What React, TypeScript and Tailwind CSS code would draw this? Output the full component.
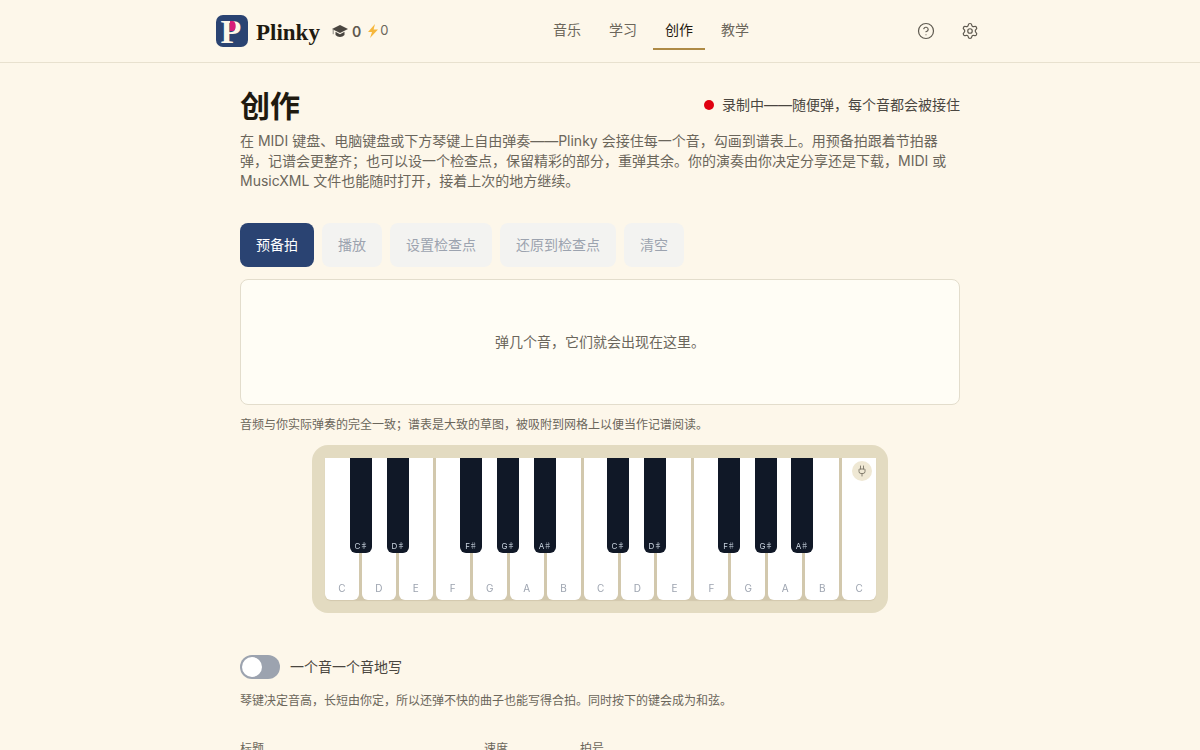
import { CircleHelp, Plug, Settings } from "lucide-react";

const navItems = ["音乐", "学习", "创作", "教学"];
const actions = ["播放", "设置检查点", "还原到检查点", "清空"];
const whiteKeys = ["C", "D", "E", "F", "G", "A", "B", "C", "D", "E", "F", "G", "A", "B", "C"];
const blackKeys = [
  { label: "C♯", className: "left-[25px]" },
  { label: "D♯", className: "left-[62px]" },
  { label: "F♯", className: "left-[135px]" },
  { label: "G♯", className: "left-[172px]" },
  { label: "A♯", className: "left-[209px]" },
  { label: "C♯", className: "left-[282px]" },
  { label: "D♯", className: "left-[319px]" },
  { label: "F♯", className: "left-[393px]" },
  { label: "G♯", className: "left-[430px]" },
  { label: "A♯", className: "left-[466px]" },
];

function Logo() {
  return (
    <svg width="32" height="32" viewBox="0 0 32 32" className="shrink-0">
      <rect width="32" height="32" rx="7" fill="#2a4372" />
      <text x="15" y="28" textAnchor="middle" fontFamily="Liberation Serif" fontWeight="700" fontSize="34" fill="#fdf7ea">
        P
      </text>
      <path d="M14 6h2.5c2 0 3.2 2 3.2 5s-1.200 5-3.200 5H14Z" fill="#d81b78" />
    </svg>
  );
}

function Cap() {
  return (
    <svg width="16" height="14" viewBox="0 0 16 14" className="shrink-0">
      <path d="M8 1 16 5 8 9 0 5Z" fill="#4a4640" />
      <path d="M3.5 7.800V11c1.200 1.300 2.800 2 4.500 2s3.300-.7 4.500-2V7.800L8 10.200Z" fill="#4a4640" />
      <path d="M1.200 5.600v4.600" stroke="#8b8880" strokeWidth="1" />
    </svg>
  );
}

function Bolt() {
  return (
    <svg width="12" height="14" viewBox="0 0 12 14" className="shrink-0">
      <path d="M8 0 1 8h4l-2 6 8-8.400H6.600Z" fill="#f6b73c" />
    </svg>
  );
}

export default function App() {
  return (
    <div className="min-h-screen bg-[#fdf7ea] font-['Inter','Noto_Sans_CJK_SC',sans-serif] text-[#1f1a10]">
      <header className="h-[63px] border-b border-[#e8e1cf]">
        <div className="mx-auto flex h-[62px] w-[768px] items-center">
          <div className="flex w-[325px] items-center">
            <Logo />
            <span className="ml-2 mt-1 font-['Liberation_Serif',serif] text-[23px] font-bold text-[#1f1a10]">Plinky</span>
            <span className="ml-3 flex items-center gap-1 text-[14px] font-semibold text-[#5f5a50]">
              <Cap />0
            </span>
            <span className="ml-[6px] flex items-center gap-[1px] text-[13px] text-[#6b665b]">
              <Bolt />0
            </span>
          </div>
          <nav className="flex h-full gap-1 pt-3">
            {navItems.map((item) => (
              <div
                key={item}
                className={`flex h-[38px] w-[52px] items-center justify-center border-b-2 pb-[2px] text-[14px] ${
                  item === "创作" ? "border-[#ae8a45] text-[#1f1a10]" : "border-transparent text-[#6b665b]"
                }`}
              >
                {item}
              </div>
            ))}
          </nav>
          <div className="flex w-[223px] items-center justify-end gap-[26px] pr-[5px] text-[#5f5a50]">
            <CircleHelp size={18} strokeWidth={1.6} />
            <Settings size={18} strokeWidth={1.6} />
          </div>
        </div>
      </header>

      <main className="mx-auto w-[720px] pt-[23px]">
        <div className="flex items-start justify-between">
          <h1 className="text-[30px] font-bold leading-[40px] text-[#1f1a10]">创作</h1>
          <div className="mt-2 flex items-center gap-2 text-[14px] text-[#4a4640]">
            <span className="h-[10px] w-[10px] rounded-full bg-[#e00010]" />
            录制中——随便弹，每个音都会被接住
          </div>
        </div>
        <p className="mt-[5px] text-[14px] leading-[20px] text-[#6b665b]">
          在 MIDI 键盘、电脑键盘或下方琴键上自由弹奏——Plinky 会接住每一个音，勾画到谱表上。用预备拍跟着节拍器弹，记谱会更整齐；也可以设一个检查点，保留精彩的部分，重弹其余。你的演奏由你决定分享还是下载，MIDI 或 MusicXML 文件也能随时打开，接着上次的地方继续。
        </p>

        <div className="mt-[32px] flex gap-2">
          <button className="h-[44px] rounded-lg bg-[#2a4372] px-4 pb-[2px] text-[14px] text-white">预备拍</button>
          {actions.map((action) => (
            <button key={action} className="h-[44px] rounded-lg bg-[#f3f3f1] px-4 pb-[2px] text-[14px] text-[#9ca3af]">
              {action}
            </button>
          ))}
        </div>

        <div className="mt-3 flex h-[126px] items-center justify-center rounded-lg border border-[#e3ddcc] bg-[#fffdf5] pb-[2px] text-[14px] text-[#6b665b]">
          弹几个音，它们就会出现在这里。
        </div>
        <p className="mt-[10px] text-[12px] leading-[20px] text-[#6b665b]">
          音频与你实际弹奏的完全一致；谱表是大致的草图，被吸附到网格上以便当作记谱阅读。
        </p>

        <div className="mx-auto mt-[10px] w-[576px] rounded-2xl bg-[#e3dbc1] pb-[13px] pl-[13px] pr-3 pt-[13px]">
          <div className="relative h-[142px]">
            <div className="flex h-full gap-[3px] rounded-b-md bg-[#d2c8ad] shadow-[0_1px_1px_#d2c8ad]">
              {whiteKeys.map((key, i) => (
                <div key={i} className="flex flex-1 items-end justify-center rounded-b-md bg-white pb-1 text-[10px] text-[#9ca3af]">
                  <span className="transform-gpu">{key}</span>
                </div>
              ))}
            </div>
            {blackKeys.map((key, i) => (
              <div
                key={i}
                className={`absolute top-0 flex h-[95px] w-[22px] items-end justify-center rounded-b-md bg-[#101827] pb-[1px] text-[8px] tracking-[-0.5px] text-[#cbd5e1] ${key.className}`}
              >
                <span className="transform-gpu">{key.label}</span>
              </div>
            ))}
            <div className="absolute right-1 top-[3px] flex h-5 w-5 items-center justify-center rounded-full bg-[#efe8d4] text-[#7a7566]">
              <Plug size={12} strokeWidth={1.8} />
            </div>
          </div>
        </div>

        <div className="mt-[42px] flex items-center gap-[10px]">
          <div className="flex h-6 w-10 items-center rounded-full bg-[#9ca3af] p-[2px]">
            <span className="h-5 w-5 rounded-full bg-white" />
          </div>
          <span className="pb-[2px] text-[14px] text-[#4a4640]">一个音一个音地写</span>
        </div>
        <p className="mt-[12px] text-[12px] leading-[20px] text-[#6b665b]">
          琴键决定音高，长短由你定，所以还弹不快的曲子也能写得合拍。同时按下的键会成为和弦。
        </p>

        <div className="mt-[29px] flex gap-[20px] pb-10 text-[12px] text-[#6b665b]">
          <label className="w-[224px]">标题</label>
          <label className="w-[76px]">速度</label>
          <label>拍号</label>
        </div>
      </main>
    </div>
  );
}
